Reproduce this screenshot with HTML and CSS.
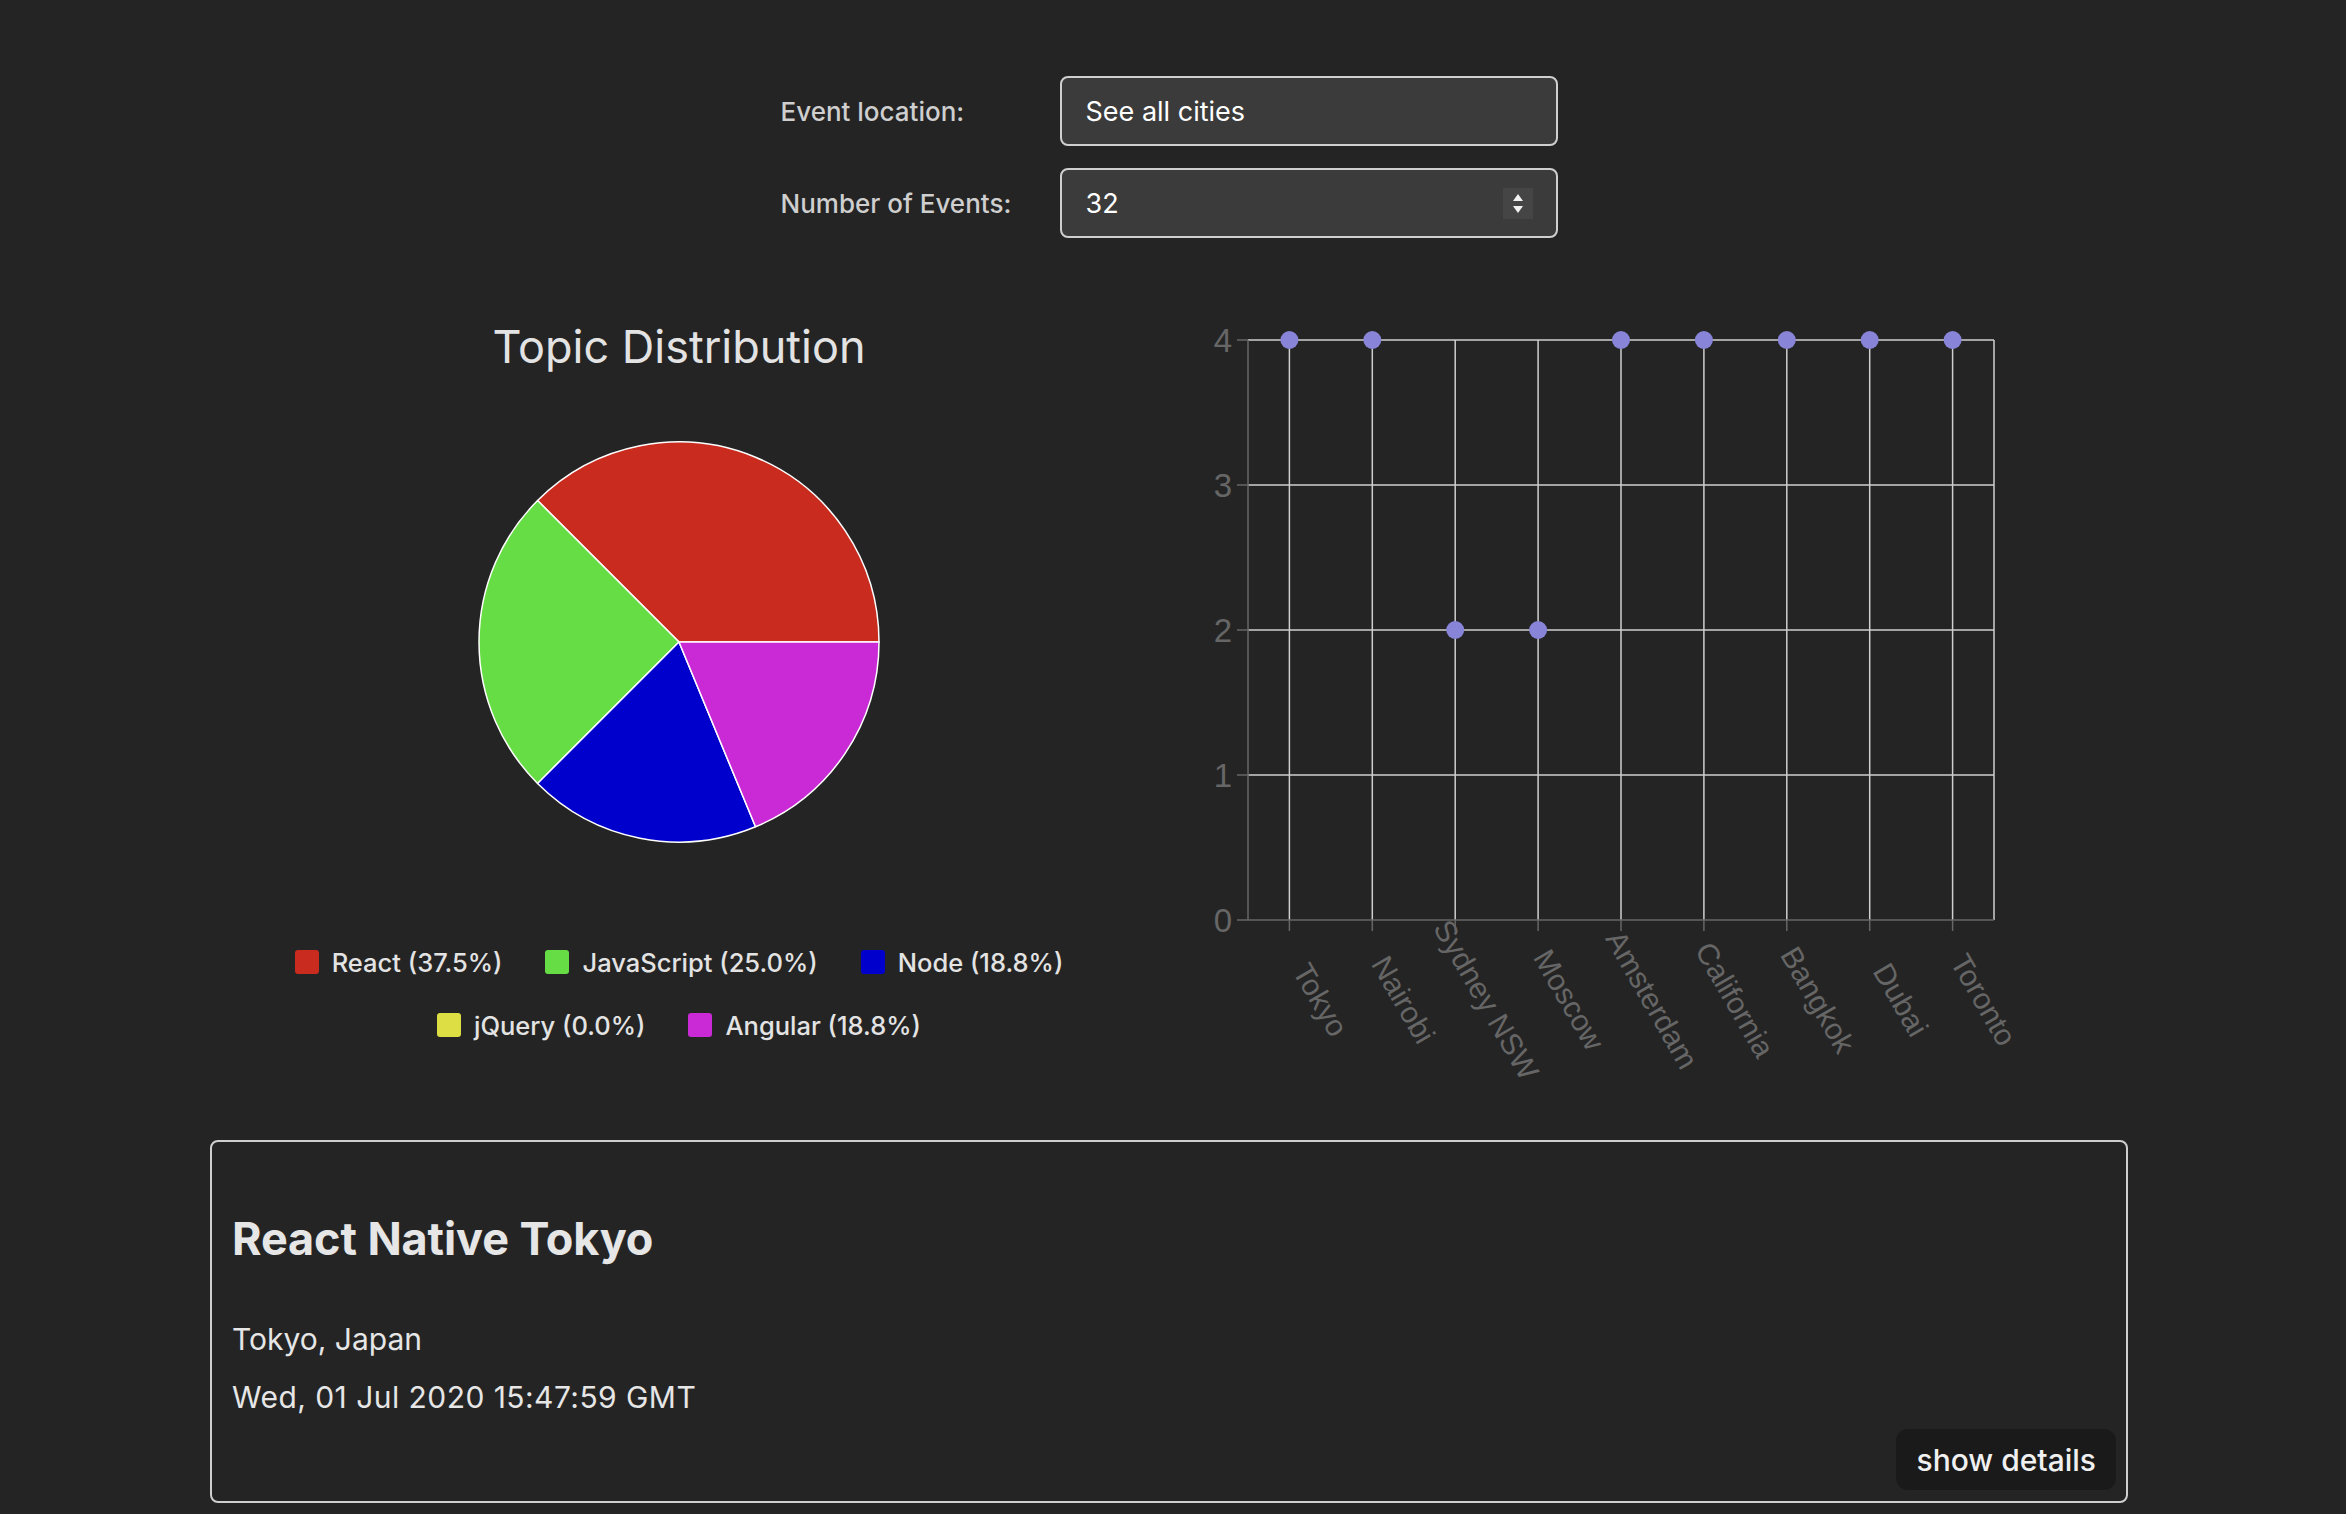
FILE: index.html
```html
<!DOCTYPE html>
<html lang="en">
<head>
<meta charset="utf-8">
<title>Meet App</title>
<link rel="stylesheet" href="styles.css">
</head>
<body>
<div class="app">
  <div class="controls">
    <label class="ctl-label">Event location:</label>
    <div class="field">See all cities</div>
    <label class="ctl-label">Number of Events:</label>
    <div class="field field-number">
      <span>32</span>
      <span class="spinner">
        <svg width="30" height="31" viewBox="0 0 30 31"><path d="M10 13 L15 6 L20 13 Z M10 18 L20 18 L15 25 Z" fill="#f2f2f2"/></svg>
      </span>
    </div>
  </div>

  <div class="charts">
    <div class="pie-col">
      <h2 class="chart-title">Topic Distribution</h2>
      <svg class="pie" width="404" height="404" viewBox="-2 -2 404 404">
        <g stroke="#ffffff" stroke-width="1.5" stroke-linejoin="round">
          <path d="M200 200 L400 200 A200 200 0 0 0 58.58 58.58 Z" fill="#c92c1f"/>
          <path d="M200 200 L58.58 58.58 A200 200 0 0 0 58.58 341.42 Z" fill="#66dd44"/>
          <path d="M200 200 L58.58 341.42 A200 200 0 0 0 276.54 384.78 Z" fill="#0000cc"/>
          <path d="M200 200 L276.54 384.78 A200 200 0 0 0 400 200 Z" fill="#c92ad6"/>
        </g>
      </svg>
      <div class="legend">
        <div class="legend-row">
          <span class="legend-item"><i class="sw sw-react"></i>React (37.5%)</span>
          <span class="legend-item"><i class="sw sw-js"></i>JavaScript (25.0%)</span>
          <span class="legend-item"><i class="sw sw-node"></i>Node (18.8%)</span>
        </div>
        <div class="legend-row">
          <span class="legend-item"><i class="sw sw-jq"></i>jQuery (0.0%)</span>
          <span class="legend-item"><i class="sw sw-ng"></i>Angular (18.8%)</span>
        </div>
      </div>
    </div>

    <div class="scatter-col">
      <svg class="scatter" width="960" height="780" viewBox="0 0 960 780">
        <g stroke="#cfcfcf" stroke-width="1.5" fill="none">
          <line x1="100" y1="40" x2="846" y2="40"/>
          <line x1="100" y1="185" x2="846" y2="185"/>
          <line x1="100" y1="330" x2="846" y2="330"/>
          <line x1="100" y1="475" x2="846" y2="475"/>
          <line x1="141.4" y1="40" x2="141.4" y2="620"/>
          <line x1="224.3" y1="40" x2="224.3" y2="620"/>
          <line x1="307.2" y1="40" x2="307.2" y2="620"/>
          <line x1="390.1" y1="40" x2="390.1" y2="620"/>
          <line x1="473.0" y1="40" x2="473.0" y2="620"/>
          <line x1="555.9" y1="40" x2="555.9" y2="620"/>
          <line x1="638.8" y1="40" x2="638.8" y2="620"/>
          <line x1="721.7" y1="40" x2="721.7" y2="620"/>
          <line x1="804.6" y1="40" x2="804.6" y2="620"/>
          <line x1="846" y1="40" x2="846" y2="620"/>
        </g>
        <g stroke="#666666" stroke-width="1.5" fill="none">
          <line x1="100" y1="40" x2="100" y2="620"/>
          <line x1="100" y1="620" x2="846" y2="620"/>
          <line x1="89" y1="40" x2="100" y2="40"/>
          <line x1="89" y1="185" x2="100" y2="185"/>
          <line x1="89" y1="330" x2="100" y2="330"/>
          <line x1="89" y1="475" x2="100" y2="475"/>
          <line x1="89" y1="620" x2="100" y2="620"/>
          <line x1="141.4" y1="620" x2="141.4" y2="631"/>
          <line x1="224.3" y1="620" x2="224.3" y2="631"/>
          <line x1="307.2" y1="620" x2="307.2" y2="631"/>
          <line x1="390.1" y1="620" x2="390.1" y2="631"/>
          <line x1="473.0" y1="620" x2="473.0" y2="631"/>
          <line x1="555.9" y1="620" x2="555.9" y2="631"/>
          <line x1="638.8" y1="620" x2="638.8" y2="631"/>
          <line x1="721.7" y1="620" x2="721.7" y2="631"/>
          <line x1="804.6" y1="620" x2="804.6" y2="631"/>
        </g>
        <g class="tick-text y-ticks" text-anchor="end">
          <text x="84" y="40" dy="0.36em">4</text>
          <text x="84" y="185" dy="0.36em">3</text>
          <text x="84" y="330" dy="0.36em">2</text>
          <text x="84" y="475" dy="0.36em">1</text>
          <text x="84" y="620" dy="0.36em">0</text>
        </g>
        <g class="tick-text" text-anchor="middle">
          <text x="163.4" y="705" transform="rotate(60 163.4 705)">Tokyo</text>
          <text x="246.3" y="705" transform="rotate(60 246.3 705)">Nairobi</text>
          <text x="329.2" y="705" transform="rotate(60 329.2 705)">Sydney NSW</text>
          <text x="412.1" y="705" transform="rotate(60 412.1 705)">Moscow</text>
          <text x="495.0" y="705" transform="rotate(60 495.0 705)">Amsterdam</text>
          <text x="577.9" y="705" transform="rotate(60 577.9 705)">California</text>
          <text x="660.8" y="705" transform="rotate(60 660.8 705)">Bangkok</text>
          <text x="743.7" y="705" transform="rotate(60 743.7 705)">Dubai</text>
          <text x="826.6" y="705" transform="rotate(60 826.6 705)">Toronto</text>
        </g>
        <g fill="#8884d8">
          <circle cx="141.4" cy="40" r="9"/>
          <circle cx="224.3" cy="40" r="9"/>
          <circle cx="307.2" cy="330" r="9"/>
          <circle cx="390.1" cy="330" r="9"/>
          <circle cx="473.0" cy="40" r="9"/>
          <circle cx="555.9" cy="40" r="9"/>
          <circle cx="638.8" cy="40" r="9"/>
          <circle cx="721.7" cy="40" r="9"/>
          <circle cx="804.6" cy="40" r="9"/>
        </g>
      </svg>
    </div>
  </div>

  <div class="event-card">
    <h2 class="event-title">React Native Tokyo</h2>
    <p class="event-loc">Tokyo, Japan</p>
    <p class="event-date">Wed, 01 Jul 2020 15:47:59 GMT</p>
    <div class="event-actions">
      <button class="details-btn">show details</button>
    </div>
  </div>
</div>
</body>
</html>
```

FILE: styles.css
```css
html, body {
  margin: 0;
  padding: 0;
}
body {
  background: #242424;
  color: rgba(255, 255, 255, 0.87);
  font-family: Inter, "Noto Sans", "Liberation Sans", sans-serif;
  padding-right: 8px;
  min-height: 1514px;
}
.app {
  width: 1918px;
  margin: 0 auto;
}

/* controls */
.controls {
  display: grid;
  grid-template-columns: 279px 498px;
  grid-auto-rows: 70px;
  row-gap: 22px;
  justify-content: center;
  padding-top: 76px;
}
.ctl-label {
  display: flex;
  align-items: center;
  font-size: 26px;
  font-weight: 500;
  color: rgba(255, 255, 255, 0.78);
}
.field {
  box-sizing: border-box;
  height: 70px;
  display: flex;
  align-items: center;
  justify-content: space-between;
  padding: 0 23px 0 24px;
  background: #3b3b3b;
  border: 2px solid #cfcfcf;
  border-radius: 8px;
  font-size: 27px;
  color: #ffffff;
}
.spinner {
  display: flex;
  width: 30px;
  height: 31px;
  background: #454545;
}

/* charts */
.charts {
  display: flex;
  align-items: flex-start;
  margin-top: 62px;
}
.pie-col {
  width: 938px;
  display: flex;
  flex-direction: column;
  align-items: center;
}
.chart-title {
  margin: 19px 0 0;
  font-size: 45px;
  line-height: 56px;
  font-weight: 400;
  color: #e3e3e3;
}
.pie {
  display: block;
  margin-top: 65px;
}
.legend {
  margin-top: 100px;
  display: flex;
  flex-direction: column;
  row-gap: 27px;
}
.legend-row {
  display: flex;
  justify-content: center;
  column-gap: 43px;
}
.legend-item {
  display: flex;
  align-items: center;
  height: 36px;
  font-size: 25.5px;
  font-weight: 500;
  color: #e3e3e3;
}
.sw {
  width: 24px;
  height: 24px;
  border-radius: 3px;
  margin-right: 13px;
}
.sw-react { background: #c92c1f; }
.sw-js { background: #66dd44; }
.sw-node { background: #0000cc; }
.sw-jq { background: #dddd44; }
.sw-ng { background: #c92ad6; }

.scatter-col {
  flex: 1;
}
.scatter {
  display: block;
}
.tick-text {
  font-family: "Liberation Sans", Arial, sans-serif;
  font-size: 30px;
  fill: #666666;
}
.y-ticks {
  font-size: 33px;
}

/* event card */
.event-card {
  box-sizing: border-box;
  margin-top: 60px;
  border: 2px solid #cfcfcf;
  border-radius: 8px;
  padding: 0 10px 11px 20px;
}
.event-title {
  margin: 69px 0 0;
  font-size: 45px;
  line-height: 56px;
  font-weight: 700;
  letter-spacing: -0.1px;
  color: #e6e6e6;
}
.event-loc,
.event-date {
  margin: 0;
  font-size: 30px;
  line-height: 45px;
  color: #e6e6e6;
}
.event-date {
  letter-spacing: 0.45px;
}
.event-loc { margin-top: 50px; }
.event-date { margin-top: 13px; }
.event-actions {
  display: flex;
  justify-content: flex-end;
  margin-top: 9px;
}
.details-btn {
  height: 61px;
  padding: 0 19px;
  border: 1px solid transparent;
  border-radius: 12px;
  background: #1a1a1a;
  color: #f0f0f0;
  font-family: Inter, "Noto Sans", sans-serif;
  font-size: 30px;
  font-weight: 500;
}
```
